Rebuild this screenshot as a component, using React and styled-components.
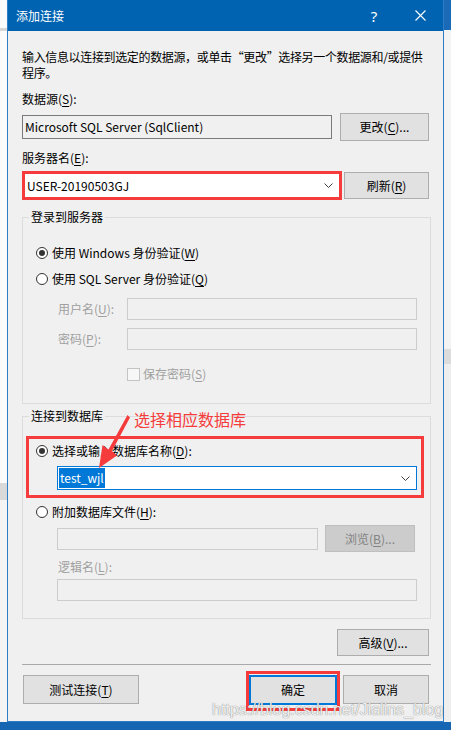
import React from "react";
import styled, { createGlobalStyle } from "styled-components";

const GlobalStyle = createGlobalStyle`
  html, body {
    margin: 0;
    padding: 0;
    background: #ffffff;
  }
  body {
    font-family: "Noto Sans CJK SC", "Noto Sans", sans-serif;
    font-size: 12px;
  }
`;

const Desktop = styled.div`
  position: relative;
  width: 451px;
  height: 730px;
  overflow: hidden;
  display: flex;
  flex-direction: column;
`;

const Stage = styled.div`
  display: flex;
  height: 722px;
`;

const LeftStrip = styled.div`
  width: 7px;
  background: linear-gradient(
    to bottom,
    #fbfbfb 0,
    #fbfbfb 28px,
    #d6d6d6 28px,
    #d6d6d6 31px,
    #fbfbfb 31px,
    #fbfbfb 483px,
    #d9d9d9 483px,
    #d9d9d9 500px,
    #f4f4f4 500px
  );
`;

const RightStrip = styled.div`
  width: 7px;
  background: linear-gradient(
    to bottom,
    #1b6ab8 0,
    #1b6ab8 30px,
    #f3f3f3 30px,
    #f3f3f3 349px,
    #dcdcdc 349px,
    #dcdcdc 364px,
    #eeeeee 364px
  );
`;

const Taskbar = styled.div`
  height: 8px;
  background: #1665b3;
`;

const Dialog = styled.div`
  width: 437px;
  box-sizing: border-box;
  border: 1px solid #2f7cc6;
  border-top: none;
  background: #f0f0f0;
  display: flex;
  flex-direction: column;
`;

const TitleBar = styled.div`
  height: 31px;
  background: #0063b1;
  display: flex;
  align-items: center;
  color: #ffffff;
  padding-left: 8px;
`;

const Title = styled.div`
  flex: 1;
  font-size: 12px;
  line-height: 16px;
`;

const CaptionButton = styled.div`
  width: 46px;
  height: 31px;
  display: flex;
  align-items: center;
  justify-content: center;
  font-family: "Noto Sans", sans-serif;
  font-size: 15px;
  color: #ffffff;
`;

const Body = styled.div`
  padding: 18px 14px 0 14px;
  display: flex;
  flex-direction: column;
`;

const Text = styled.div`
  font-size: 12px;
  line-height: 16px;
  white-space: nowrap;
  color: ${(p) => (p.$disabled ? "#a0a0a0" : "#000000")};
  margin-top: ${(p) => p.$mt || 0}px;
  margin-left: ${(p) => p.$ml || 0}px;
  width: ${(p) => (p.$w ? `${p.$w}px` : "auto")};
  letter-spacing: ${(p) => p.$ls || 0}px;
  flex-shrink: 0;
`;

const Key = styled.span`
  text-decoration: underline;
  text-underline-offset: 2px;
`;

const Row = styled.div`
  display: flex;
  align-items: ${(p) => p.$align || "center"};
  justify-content: ${(p) => p.$justify || "flex-start"};
  margin-top: ${(p) => p.$mt || 0}px;
  margin-left: ${(p) => p.$ml || 0}px;
  height: ${(p) => (p.$h ? `${p.$h}px` : "auto")};
`;

const Button = styled.div`
  box-sizing: border-box;
  width: ${(p) => p.$w}px;
  height: ${(p) => p.$h || 28}px;
  margin-top: ${(p) => p.$mt || 0}px;
  margin-left: ${(p) => p.$ml || 0}px;
  background: ${(p) => (p.$disabled ? "#cccccc" : "#e1e1e1")};
  border: ${(p) =>
    p.$focused
      ? "2px solid #0078d7"
      : p.$disabled
      ? "1px solid #bfbfbf"
      : "1px solid #adadad"};
  color: ${(p) => (p.$disabled ? "#838383" : "#000000")};
  display: flex;
  align-items: center;
  justify-content: center;
  font-size: 12px;
  line-height: 16px;
  flex-shrink: 0;
`;

const TextBox = styled.div`
  box-sizing: border-box;
  width: ${(p) => p.$w}px;
  height: ${(p) => p.$h || 22}px;
  margin-top: ${(p) => p.$mt || 0}px;
  margin-left: ${(p) => p.$ml || 0}px;
  background: #f0f0f0;
  border: 1px solid ${(p) => (p.$disabled ? "#cccccc" : "#7a7a7a")};
  display: flex;
  align-items: center;
  padding-left: 2px;
  font-size: 12px;
  line-height: 16px;
  flex-shrink: 0;
`;

const RedFrame = styled.div`
  box-sizing: border-box;
  border: 3px solid #f53b3b;
  width: ${(p) => p.$w}px;
  height: ${(p) => (p.$h ? `${p.$h}px` : "auto")};
  margin-top: ${(p) => p.$mt || 0}px;
  margin-left: ${(p) => p.$ml || 0}px;
  padding: ${(p) => p.$pad || "0"};
  flex-shrink: 0;
  display: flex;
  flex-direction: column;
`;

const Combo = styled.div`
  box-sizing: border-box;
  width: ${(p) => (p.$w ? `${p.$w}px` : "100%")};
  height: ${(p) => (p.$h ? `${p.$h}px` : "100%")};
  margin-top: ${(p) => p.$mt || 0}px;
  margin-left: ${(p) => p.$ml || 0}px;
  background: #ffffff;
  border: ${(p) => (p.$focused ? "1px solid #0078d7" : "none")};
  display: flex;
  align-items: center;
  justify-content: space-between;
  padding: ${(p) => (p.$focused ? "1px 6px 1px 1px" : "0 6px 0 0")};
  font-size: 12px;
  line-height: 16px;
`;

const ComboText = styled.span`
  padding-left: 2px;
  align-self: stretch;
  display: flex;
  align-items: center;
`;

const Selected = styled.span`
  background: #0078d7;
  color: #ffffff;
  align-self: stretch;
  display: flex;
  align-items: center;
  padding: 0 1px;
`;

const Group = styled.fieldset`
  margin: ${(p) => p.$mt || 0}px -2px 0 0;
  padding: 0 0 ${(p) => p.$pb || 0}px 0;
  border: 1px solid #dcdcdc;
  min-width: 0;
  display: flex;
  flex-direction: column;
`;

const Legend = styled.legend`
  margin-left: 6px;
  padding: 0 2px;
  font-size: 12px;
  line-height: 16px;
  color: #000000;
`;

const RadioDot = styled.span`
  box-sizing: border-box;
  width: 12px;
  height: 12px;
  border-radius: 50%;
  border: 1px solid #333333;
  background: #ffffff;
  display: flex;
  align-items: center;
  justify-content: center;
  margin-right: 4px;
  flex-shrink: 0;

  &::after {
    content: "";
    width: 6px;
    height: 6px;
    border-radius: 50%;
    background: ${(p) => (p.$checked ? "#333333" : "transparent")};
  }
`;

const CheckBox = styled.span`
  box-sizing: border-box;
  width: 13px;
  height: 13px;
  border: 1px solid #c4c4c4;
  background: #f7f7f7;
  margin-right: 3px;
  flex-shrink: 0;
`;

const Separator = styled.div`
  margin: 8px -2px 0 0;
  height: 1px;
  background: #a9a9a9;
`;

const Spacer = styled.div`
  flex: 1;
`;

const Note = styled.div`
  position: absolute;
  left: 134px;
  top: 409px;
  font-size: 16px;
  line-height: 20px;
  color: #f53b3b;
  white-space: nowrap;
`;

const ArrowSvg = styled.svg`
  position: absolute;
  left: 0;
  top: 0;
  pointer-events: none;
`;

const Watermark = styled.div`
  position: absolute;
  left: 212px;
  top: 700px;
  font-family: "Liberation Sans", Arial, sans-serif;
  font-size: 16px;
  line-height: 20px;
  color: rgba(255, 255, 255, 0.88);
  text-shadow: 0 0 1px rgba(80, 80, 80, 0.6), 0 0 1px rgba(80, 80, 80, 0.4);
  white-space: nowrap;
  pointer-events: none;
`;

const Chevron = () => (
  <svg width="9" height="5" viewBox="0 0 9 5">
    <polyline
      points="0.5,0.5 4.5,4.5 8.5,0.5"
      fill="none"
      stroke="#404040"
      strokeWidth="1"
    />
  </svg>
);

const Radio = ({ checked, children, mt, ml }) => (
  <Row $mt={mt} $ml={ml} $h={16}>
    <RadioDot $checked={checked} />
    <Text>{children}</Text>
  </Row>
);

const App = () => {
  return (
    <Desktop>
      <GlobalStyle />
      <Stage>
        <LeftStrip />
        <Dialog>
          <TitleBar>
            <Title>添加连接</Title>
            <CaptionButton>?</CaptionButton>
            <CaptionButton>
              <svg width="11" height="11" viewBox="0 0 11 11">
                <path d="M0.5 0.5 L10.5 10.5 M10.5 0.5 L0.5 10.5" stroke="#ffffff" strokeWidth="1.1" />
              </svg>
            </CaptionButton>
          </TitleBar>
          <Body>
            <Text $ls={-0.35}>
              输入信息以连接到选定的数据源，或单击“更改”选择另一个数据源和/或提供
              <br />
              程序。
            </Text>

            <Text $mt={10}>
              数据源(<Key>S</Key>):
            </Text>
            <Row $mt={6} $h={28} $justify="space-between">
              <TextBox $w={310} $h={24}>Microsoft SQL Server (SqlClient)</TextBox>
              <Button $w={89}>
                更改(<Key>C</Key>)...
              </Button>
            </Row>

            <Text $mt={9}>
              服务器名(<Key>E</Key>):
            </Text>
            <Row $mt={5} $h={29} $justify="space-between">
              <RedFrame $w={320} $h={29}>
                <Combo>
                  <ComboText>USER-20190503GJ</ComboText>
                  <Chevron />
                </Combo>
              </RedFrame>
              <Button $w={85} $h={27}>
                刷新(<Key>R</Key>)
              </Button>
            </Row>

            <Group $mt={9} $pb={21}>
              <Legend>登录到服务器</Legend>
              <Radio checked mt={20} ml={13}>
                使用 Windows 身份验证(<Key>W</Key>)
              </Radio>
              <Radio mt={10} ml={13}>
                使用 SQL Server 身份验证(<Key>Q</Key>)
              </Radio>
              <Row $mt={11} $ml={35}>
                <Text $disabled $w={69}>
                  用户名(<Key>U</Key>):
                </Text>
                <TextBox $disabled $w={290} />
              </Row>
              <Row $mt={8} $ml={35}>
                <Text $disabled $w={69}>
                  密码(<Key>P</Key>):
                </Text>
                <TextBox $disabled $w={290} />
              </Row>
              <Row $mt={16} $ml={104} $h={16}>
                <CheckBox />
                <Text $disabled>
                  保存密码(<Key>S</Key>)
                </Text>
              </Row>
            </Group>

            <Group $mt={4} $pb={17}>
              <Legend>连接到数据库</Legend>
              <RedFrame $w={398} $mt={12} $ml={3} $pad="4px 0 5px 7px">
                <Radio checked>
                  选择或输入数据库名称(<Key>D</Key>):
                </Radio>
                <Combo $focused $w={360} $h={24} $mt={7} $ml={21}>
                  <Selected>test_wjl</Selected>
                  <Chevron />
                </Combo>
              </RedFrame>
              <Radio mt={6} ml={13}>
                附加数据库文件(<Key>H</Key>):
              </Radio>
              <Row $mt={5} $ml={34} $h={27}>
                <TextBox $disabled $w={261} />
                <Button $disabled $w={90} $h={27} $ml={7}>
                  浏览(<Key>B</Key>)...
                </Button>
              </Row>
              <Text $disabled $mt={7} $ml={35}>
                逻辑名(<Key>L</Key>):
              </Text>
              <TextBox $disabled $w={360} $mt={4} $ml={34} />
            </Group>

            <Row $mt={10} $justify="flex-end">
              <Button $w={92} $h={27}>
                高级(<Key>V</Key>)...
              </Button>
            </Row>

            <Separator />

            <Row $mt={6} $align="flex-start">
              <Button $w={116} $h={29} $mt={4} $ml={1}>
                测试连接(<Key>T</Key>)
              </Button>
              <Spacer />
              <RedFrame $w={94} $pad="1px 0 3px 0">
                <Button $focused $w={88} $h={30}>
                  确定
                </Button>
              </RedFrame>
              <Button $w={86} $h={29} $mt={4} $ml={3}>
                取消
              </Button>
            </Row>
          </Body>
        </Dialog>
        <RightStrip />
      </Stage>
      <Taskbar />

      <Note>选择相应数据库</Note>
      <ArrowSvg width="451" height="730" viewBox="0 0 451 730">
        <polygon
          points="127.5,415 130,417.5 112,451 117,455.5 99,468 102.5,445 108.5,449.5"
          fill="#f53b3b"
        />
      </ArrowSvg>
      <Watermark>https://blog.csdn.net/Jialins_blog</Watermark>
    </Desktop>
  );
};

export default App;
